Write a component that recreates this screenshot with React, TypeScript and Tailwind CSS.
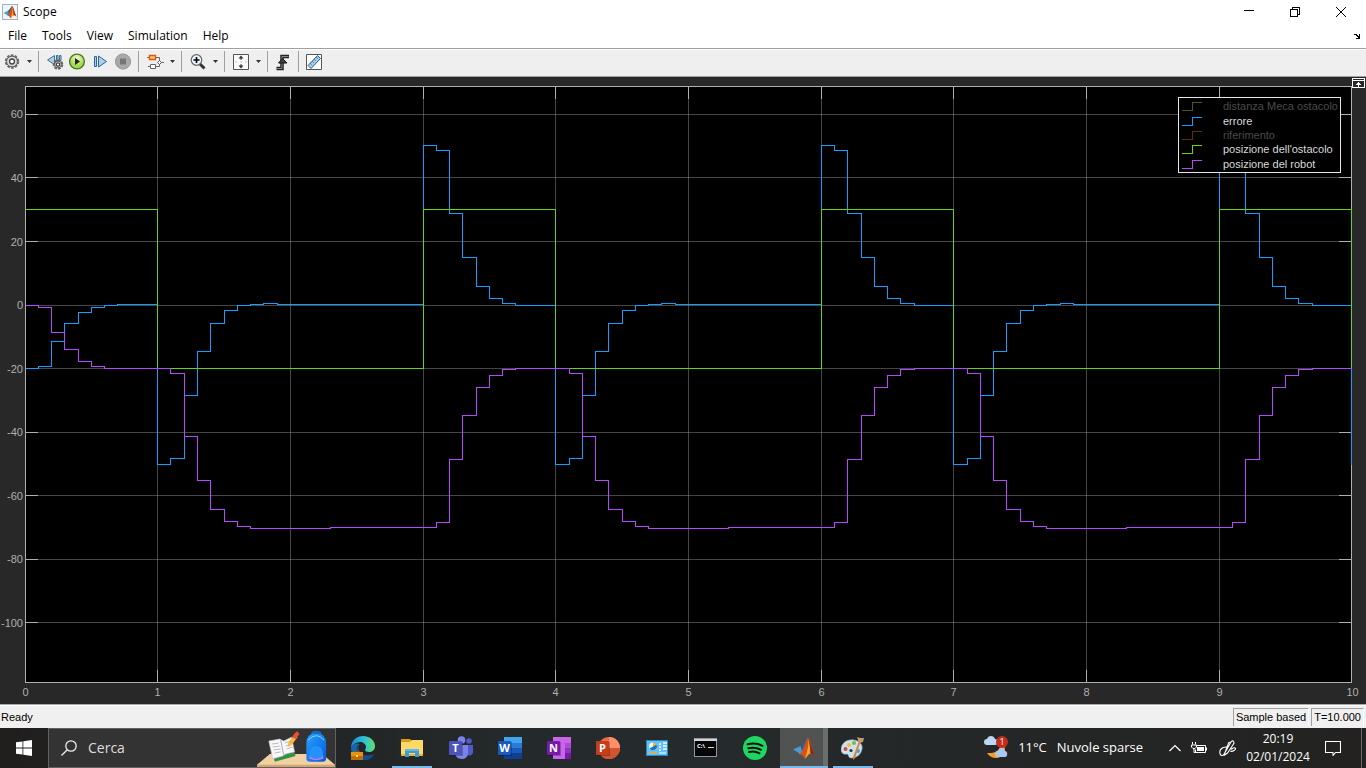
import type { ReactNode } from "react";

type Point = [number, number];

const X0 = 25;
const UNIT = 132.7;
const PLOT_TOP = 9;
const PLOT_BOTTOM = 605;
const PLOT_RIGHT = 1351;
const ZERO = 228;

const xAt = (t: number) => Math.floor(X0 + t * UNIT + 0.001) + 0.5;
const yAt = (level: number) => ZERO + level + 0.5;

// Samples are [time, pixel offset below the zero line].
const shift = (points: Point[], by: number): Point[] =>
  points.map(([t, y]) => [Math.round((t + by) * 10) / 10, y]);

const errorCycle: Point[] = [
  [1, 159], [1.1, 153], [1.2, 90], [1.3, 46], [1.4, 18], [1.5, 5], [1.6, 0], [1.7, -1], [1.8, -2], [1.9, -1],
  [3, -160], [3.1, -155], [3.2, -92], [3.3, -48], [3.4, -19], [3.5, -7], [3.6, -2], [3.7, 0],
];
const robotCycle: Point[] = [
  [1, 63], [1.1, 68], [1.2, 131], [1.3, 175], [1.4, 204], [1.5, 216], [1.6, 221], [1.7, 223], [2.3, 222],
  [3.1, 217], [3.2, 154], [3.3, 110], [3.4, 82], [3.5, 70], [3.6, 64], [3.7, 63],
];
const obstacleCycle: Point[] = [[1, 63], [3, -96]];

const repeat = (cycle: Point[]) => [...cycle, ...shift(cycle, 3), ...shift(cycle, 6)];

const errorSeries: Point[] = [
  [0, 63], [0.1, 61], [0.2, 36], [0.3, 18], [0.4, 7], [0.5, 2], [0.6, 0], [0.7, -1],
  ...repeat(errorCycle),
];
const robotSeries: Point[] = [
  [0, 0], [0.1, 2], [0.2, 27], [0.3, 44], [0.4, 56], [0.5, 61], [0.6, 63],
  ...repeat(robotCycle),
];
const obstacleSeries: Point[] = [[0, -96], ...repeat(obstacleCycle)];

const stairs = (points: Point[], last: number) =>
  points
    .map(([t, y], i) => (i === 0 ? `M${xAt(t)} ${yAt(y)}` : `H${xAt(t)}V${yAt(y)}`))
    .join("") + `H${PLOT_RIGHT + 0.5}V${yAt(last)}`;

const yTicks = [
  { label: "60", y: 37, textY: 41 }, { label: "40", y: 100, textY: 105 }, { label: "20", y: 164, textY: 169 },
  { label: "0", y: 228, textY: 232 }, { label: "-20", y: 291, textY: 296 }, { label: "-40", y: 355, textY: 359 },
  { label: "-60", y: 418, textY: 423 }, { label: "-80", y: 482, textY: 486 }, { label: "-100", y: 545, textY: 550 },
];
const xTicks = [0, 1, 2, 3, 4, 5, 6, 7, 8, 9, 10];

const legend = [
  { label: "distanza Meca ostacolo", line: "#55550f", text: "#4b4b4b", y: 29 },
  { label: "errore", line: "#139fff", text: "#d9d9d9", y: 44 },
  { label: "riferimento", line: "#66280f", text: "#4b4b4b", y: 58 },
  { label: "posizione dell'ostacolo", line: "#64d413", text: "#d9d9d9", y: 72 },
  { label: "posizione del robot", line: "#b746ff", text: "#d9d9d9", y: 87 },
];

function ScopeChart() {
  return (
    <svg viewBox="0 0 1366 627" className="h-full w-full font-['Liberation_Sans',Arial,sans-serif]" role="img" aria-label="Scope signals">
      <rect x={X0} y={PLOT_TOP} width={PLOT_RIGHT - X0} height={PLOT_BOTTOM - PLOT_TOP} fill="#000" />
      <g shapeRendering="crispEdges" fill="none" strokeWidth="1">
        <g stroke="#afafaf" strokeOpacity="0.4">
          {yTicks.map((t) => <path key={t.label} d={`M${X0} ${t.y + 0.5}H${PLOT_RIGHT}`} />)}
          {xTicks.slice(1, -1).map((t) => <path key={t} d={`M${xAt(t)} ${PLOT_TOP}V${PLOT_BOTTOM}`} />)}
        </g>
        <g stroke="#afafaf">
          {yTicks.map((t) => <path key={t.label} d={`M25 ${t.y + 0.5}h13M1339 ${t.y + 0.5}h12`} />)}
          {xTicks.slice(1, -1).map((t) => <path key={t} d={`M${xAt(t)} 9v13M${xAt(t)} 593v12`} />)}
          <path d="M25.5 9.5H1351.5V605.5H25.5Z" />
        </g>
        <path d={stairs(errorSeries, 159)} stroke="#139fff" />
        <path d={stairs(obstacleSeries, 63)} stroke="#64d413" />
        <path d={stairs(robotSeries, 63)} stroke="#b746ff" />
      </g>
      <g fill="#afafaf" fontSize="11">
        {yTicks.map((t) => <text key={t.label} x="23" y={t.textY} textAnchor="end">{t.label}</text>)}
        {xTicks.map((t) => <text key={t} x={xAt(t)} y="619" textAnchor="middle">{t}</text>)}
      </g>
      <rect x="1178.5" y="20.5" width="162" height="75" fill="#000" stroke="#e6e6e6" shapeRendering="crispEdges" />
      {legend.map((l) => (
        <g key={l.label}>
          <path d={`M1182 ${l.y + 4.5}h10.5v-8h9`} fill="none" stroke={l.line} shapeRendering="crispEdges" />
          <text x="1223" y={l.y + 4} fontSize="11" fill={l.text}>{l.label}</text>
        </g>
      ))}
      <g shapeRendering="crispEdges" fill="none" stroke="#fff">
        <path d="M1352.5 1.500h12v9h-12zM1352 3.500h13M1358.500 5v5M1357 6.500h3M1356 7.500h5" />
      </g>
    </svg>
  );
}

function MatlabMark({ size }: { size: number }) {
  return (
    <svg width={size} height={size} viewBox="0 0 24 24" aria-hidden="true">
      <path d="M1 13.5 8.5 10l4 4.5L8 18.5c-1.5-2-4-3.5-7-5Z" fill="#4a9ad4" />
      <path d="M8.500 10C11 9 13 3 16 1.500l-3.500 13-2 2Z" fill="#28618f" />
      <path d="M16 1.500C13.500 5 12.500 11 8 18.500c3-.5 4 3.500 5 4 2-1 3-5 5.500-5 2 0 3 1 4.500 2-3-5-4.500-16-7-18Z" fill="#d4521b" />
      <path d="M16 1.500c1 3 .5 11-3 21 2-1 3-5 5.500-5-.5-6-1-12-2.500-16Z" fill="#f7a531" />
      <path d="M16 1.500c2 3 3 11 7 18-1.500-1-2.500-2-4.500-2-.5-7-1-12-2.500-16Z" fill="#8e2418" />
    </svg>
  );
}

function Gear({ x, y, r }: { x: number; y: number; r: number }) {
  return (
    <g transform={`translate(${x} ${y})`}>
      <circle r={r} fill="none" stroke="#6a6a6a" strokeWidth="2" strokeDasharray="2.600 1.300" />
      <circle r={r - 0.8} fill="#dcdcdc" stroke="#555" strokeWidth="1" />
      <circle r={r * 0.4} fill="#fff" stroke="#444" strokeWidth="1.300" />
    </g>
  );
}

function ToolButton({ label, children }: { label: string; children: ReactNode }) {
  return (
    <button aria-label={label} className="flex h-6 w-5 shrink-0 items-center justify-center">
      <svg width="18" height="18" viewBox="0 0 18 18" aria-hidden="true">{children}</svg>
    </button>
  );
}

function MenuArrow({ label }: { label: string }) {
  return (
    <button aria-label={label} className="flex h-6 w-3.5 shrink-0 items-center justify-center">
      <svg width="5" height="3" viewBox="0 0 5 3" aria-hidden="true"><path d="M0 0h5L2.500 3Z" fill="#333" /></svg>
    </button>
  );
}

const Divider = ({ wide = false }: { wide?: boolean }) => (
  <span className={wide ? "ml-1 mr-1.5 h-[21px] w-px bg-[#a0a0a0]" : "ml-0.5 mr-1.5 h-[21px] w-px bg-[#a0a0a0]"} />
);

function Toolbar() {
  return (
    <div role="toolbar" className="flex h-[29px] shrink-0 items-center border-y border-[#a0a0a0] bg-[#efefef] pb-0.5 pl-0.5 shadow-[inset_0_1px_0_#fff,0_1px_0_#fff]">
      <ToolButton label="Configuration"><Gear x={9} y={8.5} r={6.2} /></ToolButton>
      <MenuArrow label="Configuration menu" />
      <Divider />
      <div className="flex gap-[3px]">
        <ToolButton label="Step back options">
          <path d="M1.500 7 8.500 2.500v9ZM10.500 2.500h1.500v5h-1.500zM13.500 2.500H15v5h-1.500z" fill="#aed0e8" stroke="#3d7096" strokeWidth="1" />
          <Gear x={12} y={11.5} r={4.3} />
        </ToolButton>
        <ToolButton label="Run">
          <defs>
            <radialGradient id="run" cy=".3"><stop offset="0" stopColor="#f3fbd9" /><stop offset="1" stopColor="#a4d653" /></radialGradient>
          </defs>
          <circle cx="8" cy="8.500" r="7.400" fill="url(#run)" stroke="#4c7a1a" strokeWidth="1.300" />
          <path d="M6 5v7l5-3.500Z" fill="#222" />
        </ToolButton>
        <ToolButton label="Step forward">
          <path d="M2.500 3.500h2v10h-2zM6.500 3v11l8-5.500Z" fill="#a9cfe9" stroke="#286795" strokeWidth="1" />
        </ToolButton>
        <ToolButton label="Stop">
          <circle cx="8" cy="8.500" r="7.600" fill="#a9a9a9" stroke="#969696" />
          <path d="M5 5.500h6v6H5z" fill="#767676" />
        </ToolButton>
      </div>
      <Divider wide />
      <ToolButton label="Signal selector">
        <path d="M1 4.500h2M10 4.500h3.500V8M2 13.500h3M10 13.500h3.500V10M15.500 9.500H18" fill="none" stroke="#666" />
        <path d="M3.500 2.500h6v4h-6z" fill="#ffc38c" stroke="#dc5a00" strokeWidth="1.400" />
        <path d="M4.500 11.500h5v4h-5z" fill="#fff" stroke="#666" />
        <path d="m13.500 7.500 2 2-2 2-2-2Z" fill="#fff" stroke="#555" />
      </ToolButton>
      <MenuArrow label="Signal menu" />
      <Divider />
      <ToolButton label="Zoom">
        <path d="m11 11 4.500 4.500" stroke="#333" strokeWidth="3" />
        <circle cx="7.500" cy="7" r="5.300" fill="#eaf4fb" stroke="#666" strokeWidth="1.200" />
        <path d="M4.500 7h6M7.500 4v6" stroke="#000" strokeWidth="1.600" />
      </ToolButton>
      <MenuArrow label="Zoom menu" />
      <Divider />
      <ToolButton label="Scale axes">
        <path d="M1.500 1.500h15v15h-15z" fill="#fafafa" stroke="#555" />
        <path d="M9 2.500 6.500 5.500h5ZM9 15.500l-2.500-3h5Z" fill="#333" />
        <path d="M9 4v3M9 11v3" stroke="#333" />
        <path d="M3 9h2M8 9h2M13 9h2" stroke="#ccc" />
      </ToolButton>
      <MenuArrow label="Scale menu" />
      <Divider />
      <ToolButton label="Triggers">
        <path d="M1.500 15.500H7V3.500h7" fill="none" stroke="#222" strokeWidth="3.500" />
        <path d="M2 15.500h5V3.500h6.500" fill="none" stroke="#888" strokeWidth="1" />
        <path d="M7.500 5.500 3.500 10h8.500Z" fill="#444" stroke="#111" />
      </ToolButton>
      <Divider wide />
      <ToolButton label="Measurements">
        <path d="M.5 1.500h15v15H.5z" fill="#fff" stroke="#555" />
        <path d="m2 12.500 9.500-10 3 3L5 15.500Z" fill="#a3cfec" stroke="#28618f" />
        <path d="m4.500 10.500 1 1M6.500 8.500l1 1M8.500 6.500l1 1M10.500 4.500l1 1" stroke="#20567f" />
      </ToolButton>
    </div>
  );
}

function OfficeTile({ letter, color }: { letter: string; color: string }) {
  return (
    <>
      <rect x="1" y="6" width="13" height="14" fill="#000" opacity=".25" />
      <rect x="0" y="5" width="13" height="14" rx="1" fill={color} />
      <text x="6.500" y="16" textAnchor="middle" fontSize="11" fontWeight="700" fill="#fff">{letter}</text>
    </>
  );
}

const apps: { label: string; running?: boolean; active?: boolean; icon: ReactNode }[] = [
  {
    label: "Microsoft Edge",
    icon: (
      <>
        <defs>
          <linearGradient id="edge" x2="1"><stop offset="0" stopColor="#1987cf" /><stop offset=".55" stopColor="#2fc1d8" /><stop offset="1" stopColor="#62df65" /></linearGradient>
        </defs>
        <path d="M0 12C0 4 6 0 12 0s12 4 12 10c0 4-3 6-6 6-2 0-4-1-4-2s1-1 1-3c0-3-3-5-6-5-4 0-7 2-9 6Z" fill="url(#edge)" />
        <path d="M0 12c2-5 6-5 9-4-2 1-4 4-3 8s5 7 10 7c3 0 5-1 7-4-2 4-6 5-10 5C6 24 0 19 0 12Z" fill="#1365b0" />
        <path d="M9 8c-3 4-1 10 4 11 4 1 8 0 10-1-2 4-6 6-10 6-6-1-9-6-7-11Z" fill="#124e91" />
        <rect y="16" width="12" height="8" fill="#c36a0b" /><rect y="16" width="12" height="4" fill="#e8930f" />
        <path d="M4 16v-1h4v1" fill="none" stroke="#9b5207" /><rect x="5" y="19" width="2" height="2" fill="#ffe27a" />
      </>
    ),
  },
  {
    label: "File Explorer",
    running: true,
    icon: (
      <>
        <path d="M1 3h9l2 2v3H1z" fill="#e09a13" />
        <path d="M1 6h9l2-2h11v16H1z" fill="#ffd965" />
        <path d="M1 18h22v2H1z" fill="#e9b43a" />
        <path d="M5 21v-8h14v8h-4v-4H9v4Z" fill="#3d9bdc" />
        <path d="M5 13h14v2H5z" fill="#62b8ec" />
      </>
    ),
  },
  {
    label: "Microsoft Teams",
    icon: (
      <>
        <circle cx="20" cy="5" r="2.800" fill="#5059c9" /><circle cx="12.500" cy="4" r="3.800" fill="#7b83eb" />
        <path d="M16 9h8v7c0 3-3 4-6 3Z" fill="#5059c9" />
        <path d="M6 9h13v8c0 4-3 6-6.500 6S6 20 6 17Z" fill="#7b83eb" />
        <OfficeTile letter="T" color="#4b53bc" />
      </>
    ),
  },
  {
    label: "Word",
    icon: (
      <>
        <path d="M6 1h18v6H6z" fill="#41a5ee" /><path d="M6 7h18v5H6z" fill="#2b7cd3" />
        <path d="M6 12h18v5H6z" fill="#185abd" /><path d="M6 17h18v6H6z" fill="#103f91" />
        <OfficeTile letter="W" color="#185abd" />
      </>
    ),
  },
  {
    label: "OneNote",
    icon: (
      <>
        <path d="M6 1h18v22H6z" fill="#ca64ea" /><path d="M18 7h6v5h-6z" fill="#ae4bd5" />
        <path d="M18 12h6v5h-6z" fill="#9332bf" /><path d="M18 17h6v6h-6z" fill="#7719aa" />
        <OfficeTile letter="N" color="#7719aa" />
      </>
    ),
  },
  {
    label: "PowerPoint",
    icon: (
      <>
        <circle cx="13" cy="12" r="11" fill="#ed6c47" /><path d="M13 1a11 11 0 0 1 11 11H13Z" fill="#ff8f6b" />
        <path d="M2 12h22a11 11 0 0 1-22 0Z" fill="#d35230" />
        <OfficeTile letter="P" color="#c43e1c" />
      </>
    ),
  },
  {
    label: "Control Panel",
    icon: (
      <>
        <rect x="1.500" y="4.500" width="21" height="15" fill="#67bff2" stroke="#2489cb" />
        <circle cx="8" cy="10.500" r="4" fill="#e8f6ff" /><path d="M8 10.500v-4a4 4 0 1 1-3.500 6Z" fill="#1b78bd" /><path d="M8 10.500V6.500a4 4 0 0 1 3.500 2Z" fill="#f5b52c" />
        <path d="M14 8h2M14 11h2M14 14h2M18 7h4M18 10h4M18 13h4" stroke="#f3fbff" strokeWidth="1.500" />
        <path d="M4 17h8" stroke="#f5a92c" strokeWidth="1.500" /><path d="M14 17h7" stroke="#fff" />
      </>
    ),
  },
  {
    label: "Command Prompt",
    icon: (
      <>
        <rect x=".5" y="2.500" width="22" height="18" fill="#050505" stroke="#92979b" />
        <path d="M0 3h23v2H0z" fill="#d2d5d8" />
        <text x="3" y="12" fontSize="6" fontWeight="700" fill="#fff">C:\</text>
        <path d="M14 11.500h6" stroke="#ddd" />
      </>
    ),
  },
  {
    label: "Spotify",
    icon: (
      <>
        <circle cx="12" cy="12" r="12" fill="#1ed760" />
        <path d="M4.500 8.300c5-1.300 10.500-.9 15 1.500M5.200 12.300c4.500-1.200 9-.6 12.800 1.500M6 16c3.800-.9 7.300-.4 10.500 1.300" fill="none" stroke="#101010" strokeWidth="2" strokeLinecap="round" />
      </>
    ),
  },
  { label: "MATLAB", running: true, active: true, icon: <MatlabMark size={24} /> },
  {
    label: "Paint",
    running: true,
    icon: (
      <>
        <path d="M0 14C0 7 6 3 13 4c6 1 9 5 8 9-1 6-6 9-11 9-3 0-2-4-4-4-3 1-6-1-6-4Z" fill="#cce2ef" stroke="#89aabd" strokeWidth=".6" />
        <circle cx="4.500" cy="13" r="2" fill="#dc4940" /><circle cx="8" cy="9" r="2" fill="#f4bd29" />
        <circle cx="13" cy="7" r="2" fill="#71bb45" /><circle cx="10" cy="14.500" r="1.600" fill="#26343d" /><circle cx="17" cy="15" r="2" fill="#4b9bd5" />
        <path d="m20 5-6 17-2 2 0-3 6-16Z" fill="#d98634" />
        <path d="m16 1 3 1 4 0-1 4-4 1Z" fill="#c49b72" />
      </>
    ),
  },
];

function SearchArt() {
  return (
    <svg width="78" height="38" viewBox="0 0 79 38" aria-hidden="true">
      <defs><linearGradient id="bag" x2="1" y2="1"><stop offset="0" stopColor="#27a2ff" /><stop offset="1" stopColor="#0759db" /></linearGradient></defs>
      <path d="M13 25h53l13 11v2H0v-2Z" fill="#f1d0a4" /><path d="M0 36h79v2H0z" fill="#d7a36d" />
      <path d="m13 15 5 18 21-6-1-4-20 5Z" fill="#319244" />
      <path d="m12 12 11-2 4 2 8-4 3 15-9 2-3 2-10 3Z" fill="#f8f7fa" stroke="#c7c1d1" strokeWidth=".7" />
      <path d="m24 11 3 15" stroke="#a9a5b8" /><path d="m15 15 7-1M16 18l7-1M17 21l7-1M18 24l6-1M28 14l6-2M29 17l6-2M30 20l6-2" stroke="#bbb" />
      <path d="m31 18 1-5 6-8 3 3-6 8Z" fill="#fcb43c" /><path d="m36 8 2-4 3-2 2 3-4 5Z" fill="#e94e37" />
      <path d="M56 6V4q0-1.500 4-1.500T64 4v2" fill="none" stroke="#086cd5" strokeWidth="2" />
      <path d="M50 14q0-10 10-10t10 10v16q0 3-4 3H54q-4 0-4-3Z" fill="url(#bag)" />
      <path d="M53 27q0-10 7-10t7 10v3H53Z" fill="#2392fb" /><path d="M53 27q7 6 14 0v3q-7 3-14 0Z" fill="#bd75ff" />
      <path d="M52 11q8-9 16 0" fill="none" stroke="#8ad5ff" />
    </svg>
  );
}

function Taskbar() {
  return (
    <footer className="flex h-10 shrink-0 items-stretch bg-linear-to-r from-[#201f1e] via-[#252b2d] via-45% to-[#232221] font-['Open_Sans','Noto_Sans',sans-serif] text-white">
      <button aria-label="Start" className="flex w-12 items-center justify-center">
        <svg width="16" height="16" viewBox="0 0 16 16" fill="#fff" aria-hidden="true"><path d="m0 2.300 6.500-.9v6.200H0zM7.300 1.300 16 0v7.600H7.300zM0 8.400h6.500v6.200L0 13.700zM7.300 8.400H16V16l-8.700-1.300z" /></svg>
      </button>
      <label className="flex w-72 items-center border border-[#616161] bg-[#333]">
        <svg className="ml-3 shrink-0" width="16" height="16" viewBox="0 0 16 16" fill="none" stroke="#eee" strokeWidth="1.300" aria-hidden="true"><circle cx="10" cy="6" r="5.200" /><path d="M6.300 9.700.5 15.500" /></svg>
        <input aria-label="Cerca" placeholder="Cerca" className="ml-[11px] w-0 min-w-0 flex-1 bg-transparent text-sm text-white outline-none placeholder:text-[#ddd]" />
        <SearchArt />
      </label>
      <nav className="ml-[3px] flex gap-px">
        {apps.map((app) => (
          <button
            key={app.label}
            aria-label={app.label}
            className={app.active ? "relative flex w-12 items-center justify-center bg-linear-to-r from-[#515353] from-90% to-[#6b6d6d] to-90%" : "relative flex w-12 items-center justify-center"}
          >
            <svg width="24" height="24" viewBox="0 0 24 24" className="font-['Open_Sans',sans-serif]" aria-hidden="true">{app.icon}</svg>
            {app.running && <span className={app.active ? "absolute inset-x-0 bottom-0 h-0.5 bg-[#76b9ed]" : "absolute inset-x-1 bottom-0 h-0.5 bg-[#76b9ed]"} />}
          </button>
        ))}
      </nav>
      <div className="ml-auto flex items-stretch">
        <button className="flex items-center gap-2.5 text-[13px]">
          <svg width="24" height="24" viewBox="0 0 24 24" aria-hidden="true">
            <path d="M15 4c4 7-1 14-12 13 5 8 17 6 18-3 0-4-2-8-6-10Z" fill="#f59a22" />
            <path d="M3 9a3 3 0 0 1 0-6c1-4 7-4 8 0 4 0 4 6 0 6Z" fill="#bed6f6" />
            <path d="M14 21a3 3 0 0 1 0-6c1-4 6-4 7 0 3 0 3 6 0 6Z" fill="#a9c7f2" />
            <circle cx="18" cy="6" r="6" fill="#c42b1c" /><text x="18" y="9" textAnchor="middle" fontSize="9" fill="#fff">1</text>
          </svg>
          <span className="whitespace-nowrap">11°C</span>
          <span className="whitespace-nowrap">Nuvole sparse</span>
        </button>
        <button aria-label="Hidden icons" className="ml-[18px] flex w-7 items-center justify-center">
          <svg width="12" height="8" viewBox="0 0 12 8" fill="none" stroke="#fff" strokeWidth="1.200" aria-hidden="true"><path d="m.5 7 5.500-5.500L11.500 7" /></svg>
        </button>
        <button aria-label="Battery" className="flex w-5 items-center justify-center">
          <svg width="16" height="13" viewBox="0 0 16 13" fill="none" stroke="#fff" aria-hidden="true"><path d="M6 3.500h8.500v7h-10v-3M15.500 5.500v3M1.500 0v2.500M4.500 0v2.500M.5 3h5v2l-1.500 1.500h-2L.5 5ZM3 7v3.500h2" /><path d="M6 5h7v4H6Z" fill="#fff" stroke="none" /></svg>
        </button>
        <button aria-label="Pen" className="ml-1 flex w-7 items-center justify-center">
          <svg width="17" height="17" viewBox="0 0 17 17" fill="none" stroke="#fff" strokeWidth="1.100" aria-hidden="true"><path d="M6 12.500 12 2q1.500-2 2.500-.5t0 2.500L8.500 13 5.500 15ZM8 7C3 6.500 0 10 1 13.500s4 2 5-1L9 4.500q1-3 2.500-2M12 9.500q2.500-2.500 4-1.500t-1 2.500-3.500.5" /></svg>
        </button>
        <time dateTime="2024-01-02T20:19" className="ml-1.5 flex w-[62px] flex-col items-center justify-center text-xs leading-[18px]">
          <span>20:19</span><span>02/01/2024</span>
        </time>
        <button aria-label="Notifications" className="mr-1 flex w-12 items-center justify-center">
          <svg width="16" height="16" viewBox="0 0 16 16" fill="none" stroke="#fff" strokeWidth="1.100" aria-hidden="true"><path d="M.5 1.500h15v11h-5l-2.500 3v-3H.5Z" /></svg>
        </button>
        <button aria-label="Show desktop" className="w-[5px] border-l border-[#686868]" />
      </div>
    </footer>
  );
}

export default function App() {
  return (
    <div className="flex h-screen flex-col overflow-hidden bg-white font-['Open_Sans','Noto_Sans',sans-serif] text-xs text-black">
      <header className="flex h-[23px] shrink-0 items-center pr-0.5">
        <span className="ml-0.5 flex h-4 w-4 items-center justify-center border border-[#9eb3c1] bg-[#f0f4f6]"><MatlabMark size={14} /></span>
        <h1 className="ml-[5px]">Scope</h1>
        <div className="ml-auto flex">
          <button aria-label="Minimize" className="flex h-5 w-[46px] items-center justify-center"><svg width="10" height="10" viewBox="0 0 10 10" shapeRendering="crispEdges" aria-hidden="true"><path d="M0 3.500h10" stroke="#000" /></svg></button>
          <button aria-label="Restore" className="flex h-5 w-[46px] items-center justify-center"><svg width="10" height="10" viewBox="0 0 10 10" fill="none" stroke="#000" shapeRendering="crispEdges" aria-hidden="true"><path d="M.5 2.500h7v7h-7zM2.500 2V.5h7v7H8" /></svg></button>
          <button aria-label="Close" className="flex h-5 w-[46px] items-center justify-center"><svg width="10" height="10" viewBox="0 0 10 10" stroke="#000" aria-hidden="true"><path d="m0 0 10 10M10 0 0 10" /></svg></button>
        </div>
      </header>
      <nav className="flex h-[25px] shrink-0 items-center gap-px pl-px">
        {["File", "Tools", "View", "Simulation", "Help"].map((item) => (
          <button key={item} className="px-[7px]">{item}</button>
        ))}
        <button aria-label="Dock" className="ml-auto mr-[5px]">
          <svg width="7" height="6" viewBox="0 0 7 6" shapeRendering="crispEdges" aria-hidden="true"><path d="M0 1h3v1h1v1h1v-2h1v5h-4v-1h2v-1h-1v-1h-1v-1h-2z" fill="#000" /></svg>
        </button>
      </nav>
      <Toolbar />
      <main className="min-h-0 flex-1 bg-[#282828]"><ScopeChart /></main>
      <div className="flex h-6 shrink-0 items-stretch border-t border-[#a9a9a9] bg-[#f0f0f0] pb-0.5 pt-[3px] font-['Liberation_Sans',Arial,sans-serif] text-[11px] shadow-[inset_0_1px_0_#fff]">
        <span className="flex items-center pl-px">Ready</span>
        <span className="ml-auto flex items-center border-l border-t border-r border-l-[#a0a0a0] border-t-[#a0a0a0] border-r-white px-0.5">Sample based</span>
        <span className="mx-0.5 flex items-center border-l border-t border-r border-l-[#a0a0a0] border-t-[#a0a0a0] border-r-white px-0.5">T=10.000</span>
      </div>
      <Taskbar />
    </div>
  );
}
